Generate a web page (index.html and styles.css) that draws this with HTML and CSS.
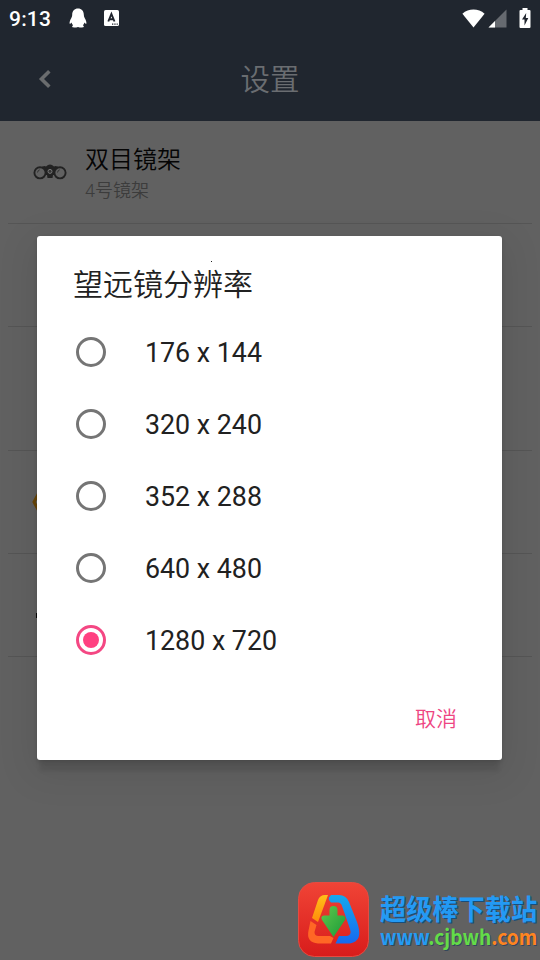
FILE: index.html
```html
<!DOCTYPE html>
<html lang="zh-CN">
<head>
<meta charset="utf-8">
<title>设置</title>
<link rel="stylesheet" href="styles.css">
</head>
<body>
<div class="screen">
  <header class="header">
    <div class="status">
      <span class="clock">9:13</span>
      <svg class="penguin" width="18" height="20" viewBox="0 0 18 20"><path fill="#fff" d="M9 .5C5.500.5 3.200 3 3.200 6.600c0 1.400-.3 2.400-1 3.700C1.200 12 .4 14.200.6 15.500c.2.8 1.100.1 1.900-1 .3 1.200.8 2 1.600 2.700-.9.5-1.200 1.100-.7 1.800.5.6 3.600.6 5.600-.1 2 .7 5.100.7 5.600.1.5-.7.2-1.300-.7-1.800.8-.7 1.300-1.500 1.600-2.700.8 1.100 1.700 1.800 1.900 1 .2-1.300-.6-3.500-1.600-5.200-.7-1.300-1-2.300-1-3.700C14.800 3 12.500.5 9 .5z"/></svg>
      <svg class="badge" width="15" height="16" viewBox="0 0 15 16"><rect width="15" height="16" rx="1.600" fill="#fff"/><path d="M4.300 11.500 7.400 4l3.100 7.500M5.600 9.300h3.800" fill="none" stroke="#20252e" stroke-width="1.900"/><path d="M8 14.200h1.300m1 0h1.300m1 0h1.200" stroke="#20252e" stroke-width="1.200"/></svg>
      <span class="spacer"></span>
      <svg class="wifi" width="23" height="19" viewBox="0 0 23 19"><path fill="#fff" d="M11.500 18.500.4 4.700C3.600 1.900 7.400.5 11.500.5s7.900 1.400 11.100 4.200z"/></svg>
      <svg class="signal" width="19" height="19" viewBox="0 0 19 19"><path fill="#666a70" d="M18.500.5v18H.5z"/><path fill="#fff" d="M7 12v6.500H.5z"/></svg>
      <svg class="battery" width="12" height="20" viewBox="0 0 12 20"><path fill="#fff" d="M3.500 0h5v2H10.500q1 0 1 1v16q0 1-1 1h-9q-1 0-1-1V3q0-1 1-1h2z"/><path fill="#20252e" d="M7.200 5 3 11.600h2.500V17.500L9.300 10H6.800z"/></svg>
    </div>
    <div class="toolbar">
      <svg class="back" width="14" height="20" viewBox="0 0 14 20"><path d="M11.300 2.300 3.500 10l7.800 7.700" fill="none" stroke="#6a6c6e" stroke-width="3.600"/></svg>
      <h1 class="title">设置</h1>
    </div>
  </header>
  <main class="list">
    <div class="row">
      <svg class="binoculars" width="34" height="16" viewBox="0 0 34 16"><path d="M7 4Q11 1 13 2.500q4-4 8 0 2-1.500 6 1.500l-5 7h-2l-.5 3h-5l-.5-3h-2z" fill="#222"/><g fill="#616161" stroke="#222" stroke-width="1.900"><circle cx="7" cy="8.800" r="5.600"/><circle cx="27" cy="8.800" r="5.600"/></g><circle cx="17" cy="7.400" r="2" fill="#333" stroke="#777"/><path d="M4.500 8.500q.2-2 2.200-2.700m17.800 2.700q.2-2 2.200-2.700" stroke="#333" fill="none"/></svg>
      <div class="label"><div class="name">双目镜架</div><div class="detail">4号镜架</div></div>
    </div>
    <div class="row"></div>
    <div class="row tall"></div>
    <div class="row"><svg class="hexagon" width="34" height="30" viewBox="0 0 34 30"><path d="M9 2 2 15l7 13h16l7-13-7-13z" fill="none" stroke="#684508" stroke-width="3"/></svg></div>
    <div class="row"><svg class="speck" width="6" height="6"><rect width="5" height="5" y="1" fill="#080808"/></svg></div>
  </main>

  <section class="dialog">
    <h2 class="heading">望远镜分辨率</h2>
    <div class="options">
      <div class="option"><i class="radio"></i><span>176 x 144</span></div>
      <div class="option"><i class="radio"></i><span>320 x 240</span></div>
      <div class="option"><i class="radio"></i><span>352 x 288</span></div>
      <div class="option"><i class="radio"></i><span>640 x 480</span></div>
      <div class="option"><i class="radio checked"></i><span>1280 x 720</span></div>
    </div>
    <div class="actions"><span class="cancel">取消</span></div>
    <i class="dot"></i>
  </section>

  <aside class="site">
    <svg width="80" height="84" viewBox="0 0 80 84">
      <defs>
        <linearGradient id="red" x2="0" y2="1"><stop stop-color="#f04436"/><stop offset="1" stop-color="#d81c1b"/></linearGradient>
        <linearGradient id="side" x2="0" y2="1"><stop stop-color="#16a8ed"/><stop offset="1" stop-color="#1769ef"/></linearGradient>
        <linearGradient id="gold" x2="0" y2="1"><stop stop-color="#ffc018"/><stop offset="1" stop-color="#ff8b0b"/></linearGradient>
        <linearGradient id="green" x2="1" y2="1"><stop stop-color="#62c84b"/><stop offset="1" stop-color="#189b39"/></linearGradient>
      </defs>
      <rect x="4.500" y="6.500" width="70" height="74" rx="16" fill="url(#red)" stroke="#e64b41"/>
      <path fill="url(#gold)" d="M34 19h-3q-5 0-7 5l-6 18 6 4 6-16z"/>
      <path fill="#ff6725" d="m16.500 45 6 4-2 7q0 4 4 4H36L39.500 62l-2.500 5.500H24q-12-1-9.500-13z"/>
      <path fill="url(#side)" d="M37 19h8q7 0 10 7l8 20q7 19-7 21.500H41.500l3.500-7.500h8q5-1 3-7L48 30q-1-3.500-4-3.500h-7q-3-3-2-5z"/>
      <path fill="url(#green)" d="M35.500 39.500V34q0-4 4-4t4 4v5.500h5.500q3.500 1 2 4.500L39.500 61 28 44q-2-4 2-4.500z"/>
    </svg>
    <div class="site-text">
      <span class="brand">超级棒下载站</span>
      <span class="url">www<b class="host">.cjbwh</b><b class="tld">.com</b></span>
    </div>
  </aside>
</div>
</body>
</html>
```
FILE: styles.css
```css
* { box-sizing: border-box; }
body { margin: 0; font-family: Roboto, "Noto Sans CJK SC", sans-serif; }
h1, h2 { margin: 0; font-weight: 350; }
svg, i { display: block; flex: none; }

.screen { position: relative; width: 540px; height: 960px; overflow: hidden; background: #616161; }

.header { height: 121px; background: #20262f; }
.status { display: flex; align-items: center; height: 36px; padding: 0 9px; }
.clock { width: 60px; padding-top: 1px; color: #fff; font-size: 21px; font-weight: 500; line-height: 36px; letter-spacing: .2px; }
.badge { margin-left: 17px; }
.spacer { flex: 1; }
.wifi { margin-right: 3px; }
.signal { margin-right: 12px; }
.toolbar { display: grid; grid-template-columns: 60px 1fr 60px; align-items: center; height: 85px; }
.back { margin-left: 38px; }
.title { padding-top: 2px; color: #6a6d71; font-size: 29.500px; line-height: 40px; text-align: center; }

.list { margin: 0 8px; }
.row { display: flex; align-items: center; height: 103px; padding-left: 25px; border-bottom: 1px solid #555; }
.tall { height: 124px; }
.label { margin-left: 18px; padding-top: 6px; font-weight: 350; }
.name { color: #050505; font-size: 24px; line-height: 31px; }
.detail { color: #3c3c3c; font-size: 18px; line-height: 30px; }
.hexagon { margin-left: -1px; }
.speck { margin: 20px 0 0 3px; }

.dialog {
  position: absolute; left: 37px; top: 236px; width: 465px; height: 524px;
  display: flex; flex-direction: column;
  border-radius: 3px; background: #fff;
  box-shadow: 0 14px 4px -3px rgba(0, 0, 0, .09), 0 10px 36px 8px rgba(0, 0, 0, .07), 0 2px 4px rgba(0, 0, 0, .12);
}
.heading { height: 80px; padding: 28px 36px 0; color: #212121; font-size: 30px; line-height: 42px; }
.option { display: flex; align-items: center; gap: 39px; height: 72px; padding-left: 39px; color: #212121; font-size: 26.800px; }
.option span { padding-top: 2px; }
.radio { display: grid; place-items: center; width: 30px; height: 30px; border: 3px solid #757575; border-radius: 50%; }
.checked { border-color: #f44783; }
.checked::after { content: ""; width: 16px; height: 16px; border-radius: 50%; background: #ff4081; }
.actions { display: flex; justify-content: flex-end; padding: 27px 45px 0; }
.cancel { color: #ee4582; font-size: 21px; font-weight: 350; line-height: 32px; }
.dot { position: absolute; left: 174px; top: 25px; width: 1px; height: 1px; background: #222; }

.site { position: absolute; left: 294px; top: 876px; display: flex; font-family: "Noto Sans CJK SC", sans-serif; font-weight: 700; white-space: nowrap; }
.site-text { display: flex; flex-direction: column; align-items: flex-start; padding: 16px 0 0 6px; }
.brand { color: #239af4; font-size: 26.200px; line-height: 32px; text-shadow: 1px 1px #174d7c; transform: scaleY(1.1); }
.url { color: #239bf3; font-size: 20.500px; line-height: 25px; text-shadow: 1px 1px #34475b; transform: scaleX(.937); transform-origin: left; }
.host { color: #63dc48; font-weight: 700; }
.tld { color: #ff8420; font-weight: 700; }
```
